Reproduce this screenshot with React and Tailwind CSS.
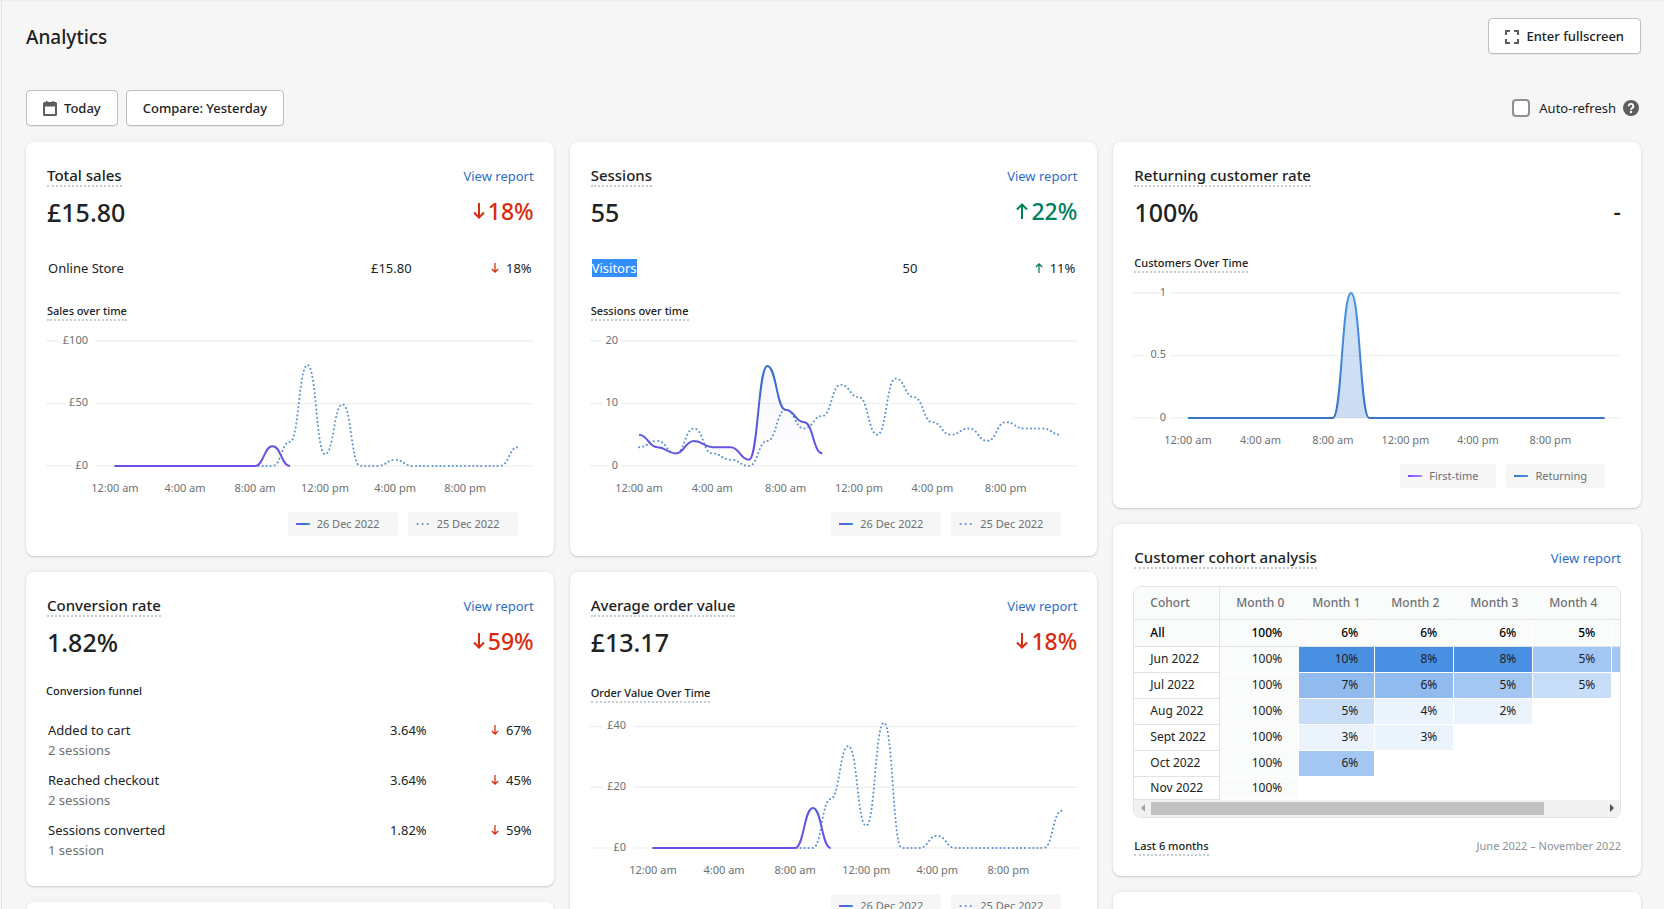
import React from "react";

const HOURS = ["12:00 am", "4:00 am", "8:00 am", "12:00 pm", "4:00 pm", "8:00 pm"];

const salesToday = [0, 0, 0, 0, 0, 0, 0, 0, 0, 15.8, 0];
const salesYesterday = [
  0, 0, 0, 0, 0, 0, 0, 0, 0, 0, 19.3, 80.8, 9.3, 49.3, 0, 0, 4.8, 0, 0, 0, 0, 0, 0, 15,
];
const sessionsToday = [5, 3, 2, 4, 3, 3, 1, 16, 9, 7, 2];
const sessionsYesterday = [
  3, 4, 2, 6, 2, 1, 0, 4, 9, 6, 8, 13, 11, 5, 14, 11, 7, 5, 6, 4, 7, 6, 6, 5,
];
const orderToday = [0, 0, 0, 0, 0, 0, 0, 0, 0, 13.17, 0];
const orderYesterday = [
  0, 0, 0, 0, 0, 0, 0, 0, 0, 0, 16.1, 33.5, 7.3, 41.2, 0, 0, 4, 0, 0, 0, 0, 0, 0, 12.2,
];
const returning = Array.from({ length: 24 }, (_, i) => (i === 9 ? 1 : 0));

const SHADES = {
  none: "bg-[#fafbfb]",
  s1: "bg-[#ebf3fc]",
  s2: "bg-[#c8ddf7]",
  s3: "bg-[#a4c6f2]",
  s4: "bg-[#91baef]",
  s5: "bg-[#4a90e2]",
};

const cohorts = [
  { name: "Jun 2022", cells: [["10%", "s5"], ["8%", "s5"], ["8%", "s5"], ["5%", "s3"], ["", "s3"]] },
  { name: "Jul 2022", cells: [["7%", "s4"], ["6%", "s4"], ["5%", "s3"], ["5%", "s2"]] },
  { name: "Aug 2022", cells: [["5%", "s2"], ["4%", "s1"], ["2%", "s1"]] },
  { name: "Sept 2022", cells: [["3%", "s1"], ["3%", "s1"]] },
  { name: "Oct 2022", cells: [["6%", "s3"]] },
  { name: "Nov 2022", cells: [] },
];

const Arrow = ({ up, className }) => (
  <svg viewBox="0 0 12 16" fill="none" stroke="currentColor" strokeWidth="2" className={className} aria-hidden="true">
    {up ? <path d="M6 16V1.5M1 6.5l5-5 5 5" /> : <path d="M6 0v14.5M1 9.5l5 5 5-5" />}
  </svg>
);

const Card = ({ children }) => (
  <section className="rounded-lg bg-white px-5 pt-[23px] pb-5 shadow-[0_0_5px_rgba(23,24,24,0.05),0_1px_2px_rgba(0,0,0,0.15)]">
    {children}
  </section>
);

const Dotted = ({ as: Tag = "h3", className, children }) => (
  <Tag className={`border-b-2 border-dotted border-[#c4cdd5] ${className}`}>{children}</Tag>
);

const CardTitle = ({ title, report = true }) => (
  <div className="flex items-start justify-between pl-px">
    <Dotted as="h2" className="text-[15px] leading-5 font-medium">
      {title}
    </Dotted>
    {report && (
      <a href="#report" className="text-[13px] leading-[22px] text-[#2c6ecb] hover:underline">
        View report
      </a>
    )}
  </div>
);

const Metric = ({ value, change, up }) => (
  <div className="mt-[7px] flex items-start justify-between pl-px">
    <p className="text-[25px] leading-9 font-medium">{value}</p>
    {change ? (
      <p className={`flex items-center text-[23px] leading-[34px] font-medium ${up ? "text-[#007f5f]" : "text-[#d72c0d]"}`}>
        <Arrow up={up} className="mr-[3px] h-4 w-3" />
        {change}
      </p>
    ) : (
      <p className="text-[23px] leading-[34px] font-medium">-</p>
    )}
  </div>
);

const SubTitle = ({ children }) => (
  <div className="flex pt-px pl-px">
    <Dotted className="text-[11px] leading-4 font-medium">{children}</Dotted>
  </div>
);

const StatTable = ({ rows, changeWidth, className }) => (
  <table className={`w-full text-[13px] leading-5 ${className}`}>
    <tbody>
      {rows.map((row) => (
        <tr key={row.label} className="align-top">
          <th scope="row" className="py-[5px] pl-0.5 text-left font-normal">
            <span className={row.selected ? "bg-[#338fff] text-white" : ""}>{row.label}</span>
            {row.note && <span className="block text-[#6d7175]">{row.note}</span>}
          </th>
          <td className="py-[5px] text-right">{row.value}</td>
          <td className={`py-[5px] pr-0.5 ${changeWidth}`}>
            <span className="flex items-center justify-end gap-[7px]">
              <Arrow up={row.up} className={`h-[10px] w-2 ${row.up ? "text-[#007f5f]" : "text-[#d72c0d]"}`} />
              {row.change}
            </span>
          </td>
        </tr>
      ))}
    </tbody>
  </table>
);

const BASE = 134;

// Each step eases in and out horizontally, so every point sits on a plateau
const curve = (points) =>
  points
    .map(([x, y], i) => {
      if (i === 0) return `M${x} ${y}`;
      const [px, py] = points[i - 1];
      const mid = (px + x) / 2;
      return `C${mid} ${py} ${mid} ${y} ${x} ${y}`;
    })
    .join("");

const Chart = ({ id, label, ticks, unit, gap, labelEnd, start, end, series, compare, solid }) => {
  const step = (end - start) / 23;
  const toPoints = (data) => data.map((v, i) => [start + i * step, BASE - v * unit]);
  const main = toPoints(series);
  const line = curve(main);
  const area = `${line}L${main[main.length - 1][0]} ${BASE}L${start} ${BASE}Z`;

  return (
    <svg viewBox="0 0 488 168" className="mt-[11px] w-full overflow-visible" role="img" aria-label={label}>
      <defs>
        <linearGradient id={`${id}-line`} gradientUnits="userSpaceOnUse" x1="0" y1={BASE} x2="0" y2="9">
          <stop offset="0" stopColor={solid ? "#3876c6" : "#6f4ee8"} />
          <stop offset="0.8" stopColor={solid ? "#4a90e2" : "#2f70c4"} />
          <stop offset="1" stopColor="#4a92e6" />
        </linearGradient>
        <linearGradient id={`${id}-area`} gradientUnits="userSpaceOnUse" x1="0" y1="9" x2="0" y2={BASE}>
          <stop offset="0" stopColor={solid ? "#4a90e2" : "#5563dc"} stopOpacity={solid ? 0.25 : 0.07} />
          <stop offset="1" stopColor={solid ? "#3876c6" : "#6f4ee8"} stopOpacity={solid ? 0.25 : 0} />
        </linearGradient>
      </defs>
      {ticks.map((t) => {
        const y = BASE - t.value * unit;
        return (
          <g key={t.label}>
            <path d={`M0 ${y}H${t.from}M${gap} ${y}H488`} stroke="#f1f1f2" strokeWidth="1.5" />
            <text x={labelEnd} y={y + 3} textAnchor="end" fill="#6d7175" className="text-[11px]">
              {t.label}
            </text>
          </g>
        );
      })}
      {HOURS.map((h, i) => (
        <text key={h} x={start + i * 4 * step} y="160" textAnchor="middle" fill="#6d7175" className="text-[11px]">
          {h}
        </text>
      ))}
      {compare && (
        <path
          d={curve(toPoints(compare))}
          fill="none"
          stroke="#5c93d4"
          strokeWidth="2"
          strokeLinecap="round"
          strokeDasharray="0.1 4"
        />
      )}
      <path d={area} fill={`url(#${id}-area)`} />
      <path d={line} fill="none" stroke={`url(#${id}-line)`} strokeWidth="2" />
    </svg>
  );
};

const Swatch = ({ kind }) => {
  if (kind === "dots") {
    return (
      <svg viewBox="0 0 14 2" className="h-0.5 w-3.5" aria-hidden="true">
        <path d="M1.5 1h12" stroke="#5c93d4" strokeWidth="2" strokeLinecap="round" strokeDasharray="0.1 5" />
      </svg>
    );
  }
  const shade = {
    mixed: "from-[#7f4afa] via-[#2f70c4] to-[#4a92e6]",
    purple: "from-[#7f4afa] to-[#a883fb]",
    blue: "from-[#3876c6] to-[#4a92e6]",
  }[kind];
  return <span className={`h-0.5 w-3.5 bg-linear-to-r ${shade}`} />;
};

const Legend = ({ items }) => (
  <ul className="mt-3 mr-4 flex justify-end gap-[10px]">
    {items.map(([kind, text]) => (
      <li key={text} className="flex h-6 items-center gap-[7px] rounded-xs bg-[#f6f6f6] pr-[18px] pl-2 text-[11px] text-[#6d7175]">
        <Swatch kind={kind} />
        {text}
      </li>
    ))}
  </ul>
);

const dateLegend = [
  ["mixed", "26 Dec 2022"],
  ["dots", "25 Dec 2022"],
];

const CohortTable = () => (
  <div className="mt-[17px] overflow-hidden rounded-lg border border-[#e1e3e5]">
    <div className="overflow-hidden">
      <table className="w-[556px] table-fixed border-separate border-spacing-0 text-xs leading-4">
        <colgroup>
          <col className="w-[86px]" />
          <col className="w-[79px]" />
          <col className="w-[76px]" />
          <col className="w-[79px]" />
          <col className="w-[79px]" />
          <col className="w-[79px]" />
          <col className="w-[78px]" />
        </colgroup>
        <thead>
          <tr className="h-[33px] bg-[#fafbfb] text-[#6d7175]">
            <th scope="col" className="border-r border-b border-[#e1e3e5] pl-4 text-left font-medium">
              Cohort
            </th>
            {[0, 1, 2, 3, 4].map((m) => (
              <th key={m} scope="col" className="border-b border-[#e1e3e5] pr-[15px] text-right font-medium">
                Month {m}
              </th>
            ))}
            <th scope="col" aria-label="Month 5" className="border-b border-[#e1e3e5]" />
          </tr>
        </thead>
        <tbody>
          <tr className="h-[27px] bg-[#fafbfb] font-medium text-black">
            <th scope="row" className="border-r border-b border-[#e1e3e5] pl-4 text-left font-medium">
              All
            </th>
            {["100%", "6%", "6%", "6%", "5%", ""].map((v, i) => (
              <td key={i} className="border-r border-b border-r-white border-b-[#e1e3e5] pr-4 text-right">
                {v}
              </td>
            ))}
          </tr>
          {cohorts.map((c) => (
            <tr key={c.name} className="h-[26px] last:h-[23px]">
              <th scope="row" className="border-r border-b border-[#e1e3e5] pl-4 text-left font-normal">
                {c.name}
              </th>
              <td className={`border-r border-b border-white pr-4 text-right ${SHADES.none}`}>100%</td>
              {c.cells.map(([v, shade], i) => (
                <td key={i} className={`border-r border-b border-white pr-4 text-right ${SHADES[shade]}`}>
                  {v}
                </td>
              ))}
            </tr>
          ))}
        </tbody>
      </table>
    </div>
    <div className="flex h-[17px] items-center bg-[#f1f1f1]">
      <button aria-label="Scroll left" className="flex h-full w-[17px] items-center justify-center">
        <svg viewBox="0 0 4 8" className="h-2 w-1" fill="#a3a3a3">
          <path d="M4 0v8L0 4z" />
        </svg>
      </button>
      <div className="h-full flex-1 py-0.5">
        <div className="h-full w-[87%] bg-[#c1c1c1]" />
      </div>
      <button aria-label="Scroll right" className="flex h-full w-[17px] items-center justify-center">
        <svg viewBox="0 0 4 8" className="h-2 w-1" fill="#505050">
          <path d="M0 0v8l4-4z" />
        </svg>
      </button>
    </div>
  </div>
);

const buttonClass =
  "flex h-9 items-center gap-[7px] rounded border border-[#babfc3] bg-white px-4 pt-px text-[13px] font-medium shadow-[0_1px_0_rgba(0,0,0,0.05)] hover:bg-[#f6f6f7]";

const Header = () => (
  <header>
    <div className="flex items-start justify-between pt-[17px]">
      <h1 className="text-[19px] leading-[38px] font-medium">Analytics</h1>
      <button className={buttonClass}>
        <svg viewBox="0 0 14 14" className="size-3.5" fill="none" stroke="#5c5f62" strokeWidth="2" aria-hidden="true">
          <path d="M1 5V1h4M9 1h4v4M13 9v4H9M5 13H1V9" />
        </svg>
        Enter fullscreen
      </button>
    </div>
    <div className="mt-[34px] flex items-center justify-between">
      <div className="flex gap-2">
        <button className={buttonClass}>
          <svg viewBox="0 0 14 15" className="h-[15px] w-3.5" fill="#5c5f62" aria-hidden="true">
            <path
              fillRule="evenodd"
              d="M3 0h1.500v1h5V0H11v1h1.500A1.500 1.500 0 0 1 14 2.500v11a1.500 1.500 0 0 1-1.500 1.500h-11A1.500 1.500 0 0 1 0 13.500v-11A1.500 1.500 0 0 1 1.500 1H3zM2 5.500V13h10V5.500z"
            />
          </svg>
          Today
        </button>
        <button className={buttonClass}>Compare: Yesterday</button>
      </div>
      <div className="flex items-center pr-0.5">
        <input
          id="auto-refresh"
          type="checkbox"
          className="size-[18px] appearance-none rounded border-2 border-[#8c9196] bg-white checked:bg-[#007f5f]"
        />
        <label htmlFor="auto-refresh" className="pr-[7px] pl-[9px] text-[13px] leading-5">
          Auto-refresh
        </label>
        <svg viewBox="0 0 16 16" className="size-4" aria-label="Help" role="img">
          <circle cx="8" cy="8" r="8" fill="#5c5f62" />
          <path d="M5.700 6.200a2.300 2.300 0 1 1 3.400 2c-.7.400-1.100.7-1.100 1.500" fill="none" stroke="#fff" strokeWidth="1.900" />
          <circle cx="8" cy="12" r="1.200" fill="#fff" />
        </svg>
      </div>
    </div>
  </header>
);

const App = () => {
  return (
    <div className="h-screen overflow-hidden border-t border-[#eeeeef] bg-[#f6f6f6] pl-px font-['Noto_Sans','Open_Sans',sans-serif] text-[#202223]">
      <main className="min-h-screen border-l border-[#e1e3e5] pr-[23px] pl-6">
        <Header />

        <div className="mt-4 grid grid-cols-3 items-start gap-4">
          <div className="flex flex-col gap-4">
            <Card>
              <CardTitle title="Total sales" />
              <Metric value="£15.80" change="18%" />
              <StatTable
                className="mt-[23px] mb-[19px]"
                changeWidth="w-[122px]"
                rows={[{ label: "Online Store", value: "£15.80", change: "18%" }]}
              />
              <SubTitle>Sales over time</SubTitle>
              <Chart
                id="sales"
                label="Sales over time"
                ticks={[
                  { value: 100, label: "£100", from: 13 },
                  { value: 50, label: "£50", from: 19 },
                  { value: 0, label: "£0", from: 26 },
                ]}
                unit={1.25}
                gap={50}
                labelEnd={42}
                start={69}
                end={472}
                series={salesToday}
                compare={salesYesterday}
              />
              <Legend items={dateLegend} />
            </Card>

            <Card>
              <CardTitle title="Conversion rate" />
              <Metric value="1.82%" change="59%" />
              <h3 className="mt-[23px] text-[11px] leading-4 font-medium">Conversion funnel</h3>
              <StatTable
                className="mt-4 mb-px"
                changeWidth="w-[107px]"
                rows={[
                  { label: "Added to cart", note: "2 sessions", value: "3.64%", change: "67%" },
                  { label: "Reached checkout", note: "2 sessions", value: "3.64%", change: "45%" },
                  { label: "Sessions converted", note: "1 session", value: "1.82%", change: "59%" },
                ]}
              />
            </Card>

            <Card />
          </div>

          <div className="flex flex-col gap-4">
            <Card>
              <CardTitle title="Sessions" />
              <Metric value="55" change="22%" up />
              <StatTable
                className="mt-[23px] mb-[19px]"
                changeWidth="w-[160px]"
                rows={[{ label: "Visitors", value: "50", change: "11%", up: true, selected: true }]}
              />
              <SubTitle>Sessions over time</SubTitle>
              <Chart
                id="sessions"
                label="Sessions over time"
                ticks={[
                  { value: 20, label: "20", from: 12 },
                  { value: 10, label: "10", from: 13 },
                  { value: 0, label: "0", from: 19 },
                ]}
                unit={6.25}
                gap={31}
                labelEnd={28}
                start={49}
                end={471}
                series={sessionsToday}
                compare={sessionsYesterday}
              />
              <Legend items={dateLegend} />
            </Card>

            <Card>
              <CardTitle title="Average order value" />
              <Metric value="£13.17" change="18%" />
              <div className="mt-6">
                <SubTitle>Order Value Over Time</SubTitle>
              </div>
              <Chart
                id="orders"
                label="Order value over time"
                ticks={[
                  { value: 40, label: "£40", from: 13 },
                  { value: 20, label: "£20", from: 14 },
                  { value: 0, label: "£0", from: 22 },
                ]}
                unit={3.04}
                gap={44}
                labelEnd={36}
                start={63}
                end={472}
                series={orderToday}
                compare={orderYesterday}
              />
              <Legend items={dateLegend} />
            </Card>
          </div>

          <div className="flex flex-col gap-4">
            <Card>
              <CardTitle title="Returning customer rate" report={false} />
              <Metric value="100%" />
              <div className="mt-6">
                <SubTitle>Customers Over Time</SubTitle>
              </div>
              <Chart
                id="customers"
                label="Customers over time"
                ticks={[
                  { value: 1, label: "1", from: 27 },
                  { value: 0.5, label: "0.5", from: 14 },
                  { value: 0, label: "0", from: 25 },
                ]}
                unit={125}
                gap={37}
                labelEnd={33}
                start={55}
                end={472}
                series={returning}
                solid
              />
              <Legend
                items={[
                  ["purple", "First-time"],
                  ["blue", "Returning"],
                ]}
              />
            </Card>

            <Card>
              <CardTitle title="Customer cohort analysis" />
              <CohortTable />
              <div className="mt-5 flex items-start justify-between pl-px text-[11px] leading-4">
                <Dotted className="font-medium">Last 6 months</Dotted>
                <p className="text-[#8c9196]">June 2022 – November 2022</p>
              </div>
            </Card>

            <Card />
          </div>
        </div>
      </main>
    </div>
  );
};

export default App;
